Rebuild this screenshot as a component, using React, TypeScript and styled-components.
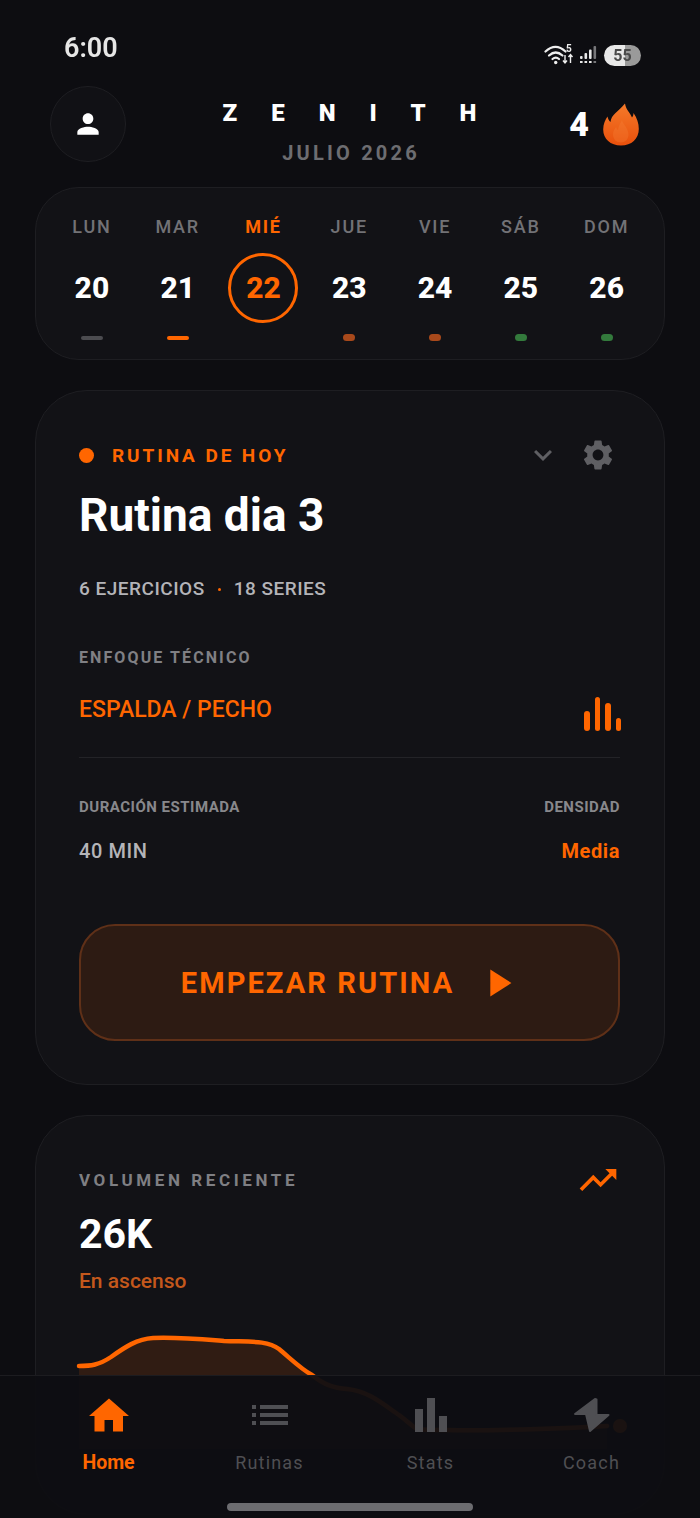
import * as React from 'react'
import styled, { createGlobalStyle } from 'styled-components'
import {
  MdPerson,
  MdSettings,
  MdKeyboardArrowDown,
  MdList,
  MdPlayArrow,
  MdTrendingUp,
} from 'react-icons/md'

const orange = '#ff6600'

const GlobalStyle = createGlobalStyle`
  html, body {
    margin: 0;
    padding: 0;
    background: #0d0d11;
  }
  * {
    box-sizing: border-box;
  }
`

const Page = styled.div`
  position: relative;
  width: 700px;
  height: 1518px;
  overflow: hidden;
  background: #0d0d11;
  color: #fff;
  font-family: Roboto, 'Noto Sans', sans-serif;
`

const StatusBar = styled.div`
  height: 86px;
  padding: 34px 59px 0 64px;
  display: flex;
  justify-content: space-between;
  align-items: flex-start;
  filter: blur(0.5px);
`

const Clock = styled.span`
  font-size: 27px;
  line-height: 29px;
  font-weight: 600;
  color: #e6e6e6;
`

const StatusIcons = styled.div`
  display: flex;
  align-items: center;
  gap: 5px;
  margin-top: 9px;
`

const Battery = styled.div`
  width: 37px;
  height: 21px;
  border-radius: 11px;
  background: linear-gradient(90deg, #e8e8e8 0 58%, #9a9a9a 58% 100%);
  color: #4a4a4a;
  font-size: 16px;
  font-weight: 700;
  line-height: 21px;
  text-align: center;
`

const Header = styled.header`
  height: 76px;
  margin: 0 61px 25px 50px;
  display: grid;
  grid-template-columns: 76px 1fr 71px;
  grid-template-rows: 76px;
  align-items: center;
`

const Avatar = styled.div`
  width: 76px;
  height: 76px;
  border-radius: 50%;
  border: 1px solid #1e1e22;
  background: #111115;
  display: flex;
  align-items: center;
  justify-content: center;
  color: #fff;
  font-size: 32px;
`

const Brand = styled.div`
  align-self: start;
  display: flex;
  flex-direction: column;
  align-items: center;
  margin-left: 5px;
  padding-top: 13px;
`

const Logo = styled.div`
  font-size: 24px;
  line-height: 28px;
  font-weight: 900;
  letter-spacing: 34px;
  margin-right: -34px;
`

const Month = styled.div`
  margin-top: 14px;
  font-size: 20px;
  line-height: 24px;
  font-weight: 700;
  letter-spacing: 3.2px;
  margin-right: -3px;
  color: #6d6d71;
`

const Streak = styled.div`
  display: flex;
  align-items: center;
  justify-content: flex-end;
  gap: 14px;
`

const StreakCount = styled.span`
  font-size: 34px;
  line-height: 40px;
  font-weight: 900;
`

const Week = styled.section`
  height: 173px;
  margin: 0 35px 30px;
  padding: 27px 12px 0 13px;
  border-radius: 44px;
  border: 1px solid #1e1e22;
  background: #121216;
  display: grid;
  grid-template-columns: repeat(7, 85.8px);
`

const Day = styled.div`
  display: flex;
  flex-direction: column;
  align-items: center;
`

const DayName = styled.span<{ $active?: boolean }>`
  font-size: 18px;
  line-height: 24px;
  font-weight: ${(p) => (p.$active ? 700 : 500)};
  letter-spacing: 1.8px;
  color: ${(p) => (p.$active ? orange : '#727276')};
`

const DayNumber = styled.span<{ $active?: boolean }>`
  width: 70px;
  height: 70px;
  margin-top: 14px;
  padding-bottom: 2px;
  border-radius: 50%;
  border: 3px solid ${(p) => (p.$active ? orange : 'transparent')};
  display: flex;
  align-items: center;
  justify-content: center;
  font-size: 30px;
  font-weight: 800;
  color: ${(p) => (p.$active ? orange : '#fff')};
`

const DayMark = styled.span<{ $color?: string; $wide?: boolean }>`
  width: ${(p) => (p.$wide ? 22 : 12)}px;
  height: ${(p) => (p.$wide ? 4 : 7)}px;
  margin-top: ${(p) => (p.$wide ? 13 : 11)}px;
  border-radius: 4px;
  background: ${(p) => p.$color ?? 'transparent'};
`

const Card = styled.section`
  margin: 0 35px 30px;
  padding: 0 44px 0 43px;
  border-radius: 52px;
  border: 1px solid #1e1e22;
  background: #121216;
`

const RoutineCard = styled(Card)`
  height: 695px;
  padding-top: 46px;
`

const RoutineTop = styled.div`
  height: 36px;
  display: flex;
  align-items: center;
`

const Dot = styled.span`
  width: 15px;
  height: 15px;
  border-radius: 50%;
  background: ${orange};
  margin-right: 18px;
`

const Eyebrow = styled.span`
  flex: 1;
  font-size: 19px;
  font-weight: 700;
  letter-spacing: 2.9px;
  color: ${orange};
`

const RoutineActions = styled.div`
  display: flex;
  align-items: center;
  gap: 19px;
  margin-right: 4px;
  color: #5f5f63;
`

const RoutineTitle = styled.h1`
  margin: 15px 0 0;
  font-size: 46px;
  line-height: 54px;
  font-weight: 700;
  color: #fff;
`

const Counts = styled.div`
  margin-top: 35px;
  display: flex;
  align-items: center;
  gap: 13px;
  font-size: 19px;
  line-height: 24px;
  font-weight: 500;
  letter-spacing: 0.5px;
  color: #b4b4b8;
`

const CountDot = styled.span`
  width: 3px;
  height: 3px;
  border-radius: 50%;
  background: ${orange};
`

const SectionLabel = styled.div`
  margin-top: 47px;
  font-size: 16px;
  line-height: 20px;
  font-weight: 700;
  letter-spacing: 2.1px;
  color: #808084;
`

const Focus = styled.div`
  height: 61px;
  margin-top: 29px;
  border-bottom: 1px solid #232327;
  display: flex;
  justify-content: space-between;
  align-items: flex-start;
`

const FocusName = styled.span`
  font-size: 23px;
  line-height: 26px;
  font-weight: 500;
  color: ${orange};
`

const Bars = styled.div`
  height: 35px;
  margin: -1px -1px 0 0;
  display: flex;
  align-items: flex-end;
  gap: 5px;
`

const Bar = styled.span<{ $h: number }>`
  width: 5.5px;
  height: ${(p) => p.$h}px;
  border-radius: 3px;
  background: ${orange};
`

const Facts = styled.div`
  margin-top: 40px;
  display: flex;
  justify-content: space-between;
`

const Fact = styled.div<{ $right?: boolean }>`
  display: flex;
  flex-direction: column;
  align-items: ${(p) => (p.$right ? 'flex-end' : 'flex-start')};
  gap: 23px;
`

const FactLabel = styled.span`
  font-size: 15px;
  line-height: 18px;
  font-weight: 700;
  letter-spacing: 0.5px;
  color: #88888c;
`

const FactValue = styled.span<{ $accent?: boolean }>`
  font-size: 20px;
  line-height: 24px;
  font-weight: ${(p) => (p.$accent ? 700 : 500)};
  letter-spacing: 0.6px;
  color: ${(p) => (p.$accent ? orange : '#b4b4b8')};
`

const StartButton = styled.button`
  width: 541px;
  height: 117px;
  margin-top: 61px;
  padding: 0 0 0 3px;
  border-radius: 36px;
  border: 2px solid #5f3018;
  background: #2d1b13;
  color: ${orange};
  font-family: inherit;
  font-size: 29px;
  font-weight: 700;
  letter-spacing: 2.1px;
  display: flex;
  align-items: center;
  justify-content: center;
  gap: 21px;
`

const VolumeCard = styled(Card)`
  height: 400px;
  padding-top: 48px;
`

const VolumeTop = styled.div`
  display: flex;
  justify-content: space-between;
  align-items: center;
  height: 32px;
  color: ${orange};
`

const VolumeLabel = styled.span`
  font-size: 17px;
  font-weight: 700;
  letter-spacing: 3.6px;
  color: #7f7f83;
`

const VolumeValue = styled.div`
  margin-top: 14px;
  font-size: 41px;
  line-height: 48px;
  font-weight: 700;
`

const VolumeTrend = styled.div`
  margin-top: 11px;
  font-size: 21px;
  line-height: 24px;
  font-weight: 500;
  color: #c4581c;
`

const Chart = styled.svg`
  display: block;
  margin-top: 36px;
  overflow: visible;
`

const BottomNav = styled.nav`
  position: absolute;
  left: 0;
  right: 0;
  bottom: 0;
  height: 143px;
  padding: 0 28px;
  border-top: 1px solid #1c1c20;
  background: rgba(14, 14, 18, 0.95);
  display: grid;
  grid-template-columns: repeat(4, 161px);
`

const NavItem = styled.div<{ $active?: boolean }>`
  display: flex;
  flex-direction: column;
  align-items: center;
  color: ${(p) => (p.$active ? orange : '#4f4f53')};
`

const NavIcon = styled.div`
  height: 44px;
  margin-top: 17px;
  display: flex;
  align-items: center;
  justify-content: center;
`

const NavLabel = styled.span<{ $active?: boolean }>`
  margin-top: 15px;
  font-size: ${(p) => (p.$active ? 19.5 : 18)}px;
  line-height: 22px;
  font-weight: ${(p) => (p.$active ? 700 : 400)};
  letter-spacing: ${(p) => (p.$active ? 0 : 1.2)}px;
`

const HomeIndicator = styled.div`
  position: absolute;
  left: 227px;
  bottom: 7px;
  width: 246px;
  height: 8px;
  border-radius: 4px;
  background: #6c6c70;
`

const WifiIcon = () => (
  <svg width="30" height="24" viewBox="0 0 30 24" fill="none">
    <path d="M1.5 8.5C8 2.5 15 2.5 21.5 8.5" stroke="#eee" strokeWidth="2.2" strokeLinecap="round" />
    <path d="M5 12.5C9.5 8.5 14 8.5 18.5 12.5" stroke="#eee" strokeWidth="2.2" strokeLinecap="round" />
    <path d="M8.5 16C10.5 14.3 13 14.3 15 16" stroke="#eee" strokeWidth="2.2" strokeLinecap="round" />
    <circle cx="11.7" cy="19.5" r="1.7" fill="#eee" />
    <text x="22" y="8.5" fontSize="10" fontWeight="700" fill="#eee" fontFamily="Roboto">5</text>
    <path d="M21 12v7.5M19 17.5l2 2.5 2-2.5" stroke="#eee" strokeWidth="1.4" />
    <path d="M26.5 20v-8M24.5 14l2-2.5 2 2.5" stroke="#eee" strokeWidth="1.4" />
  </svg>
)

const SignalIcon = () => (
  <svg width="20" height="22" viewBox="0 0 20 22" fill="#e8e8e8">
    <rect x="1" y="12" width="2.6" height="3" rx="1" />
    <rect x="1" y="17" width="2.6" height="2" />
    <rect x="5.5" y="9" width="2.6" height="6" rx="1" />
    <rect x="5.5" y="17" width="2.6" height="2" />
    <rect x="10" y="5.5" width="2.6" height="9.5" rx="1" />
    <rect x="10" y="17" width="2.6" height="2" />
    <rect x="14.5" y="2" width="2.6" height="13" rx="1" fill="#77777a" />
    <rect x="14.5" y="17" width="2.6" height="2" fill="#77777a" />
  </svg>
)

const FlameIcon = () => (
  <svg width="36" height="43" viewBox="0 0 36 43">
    <defs>
      <linearGradient id="flame" x1="0" y1="0" x2="0" y2="1">
        <stop offset="0" stopColor="#f47a2a" />
        <stop offset="1" stopColor="#e9500c" />
      </linearGradient>
    </defs>
    <path
      d="M22 0.5C23 7 27 9.5 29 14.5C30 13.5 30.5 11.5 30.5 10C34 14.5 35.8 20.5 35.8 26C35.8 36 28.5 42.5 18 42.5C7.5 42.5 0.2 36 0.2 26.5C0.2 21 2.5 16.5 4.5 13.5C5 16 6 18 7.5 19C8 11.5 15.5 8.5 22 0.5Z"
      fill="url(#flame)"
    />
    <path
      d="M19 17C20 21.5 25.5 25 25.5 31.5C25.5 36.5 22 39.5 18 39.5C13.5 39.5 10 36.5 10 31.5C10 28 11.8 25.5 13.2 24C13.6 25.5 14 26.5 15 27C15.2 23 17.5 20.5 19 17Z"
      fill="#f5833c"
      opacity="0.3"
    />
  </svg>
)

const HomeNavIcon = () => (
  <svg width="40" height="34" viewBox="0 0 40 34" fill="currentColor">
    <path d="M20 0.5L40 18H34V33.5H24V22H15.5V33.5H5.5V18H0Z" />
  </svg>
)

const BarsNavIcon = () => (
  <svg width="32" height="34" viewBox="0 0 32 34" fill="currentColor">
    <rect x="0" y="11" width="8" height="23" />
    <rect x="12" y="0" width="8" height="34" />
    <rect x="24" y="18" width="8" height="16" />
  </svg>
)

const BoltIcon = () => (
  <svg width="38" height="36" viewBox="0 0 38 36" fill="currentColor" stroke="currentColor" strokeWidth="2" strokeLinejoin="round">
    <path d="M22 2L2 17H13L17 34L35.5 18H23.5V2.5Z" />
  </svg>
)

const days = [
  { name: 'LUN', num: 20, mark: '#4c4c50', wide: true },
  { name: 'MAR', num: 21, mark: orange, wide: true },
  { name: 'MIÉ', num: 22, active: true },
  { name: 'JUE', num: 23, mark: '#a8491b' },
  { name: 'VIE', num: 24, mark: '#a8491b' },
  { name: 'SÁB', num: 25, mark: '#337a3c' },
  { name: 'DOM', num: 26, mark: '#337a3c' },
]

const curve =
  'M0 37C12 37 20 36 32 28C46 18 58 10 74 9C98 8 120 10 145 12C170 13 188 11 200 20C212 30 222 40 233 46C245 56 255 59 268 60C290 62 305 76 320 86C328 92 332 96 338 100C345 101 352 101 367 101C400 102 430 101 460 100C490 99 510 98 528 97'

const areaCurve = `${curve}L528 120L0 120Z`

const App = () => (
  <Page>
    <GlobalStyle />
    <StatusBar>
      <Clock>6:00</Clock>
      <StatusIcons>
        <WifiIcon />
        <SignalIcon />
        <Battery>55</Battery>
      </StatusIcons>
    </StatusBar>

    <Header>
      <Avatar>
        <MdPerson />
      </Avatar>
      <Brand>
        <Logo>ZENITH</Logo>
        <Month>JULIO 2026</Month>
      </Brand>
      <Streak>
        <StreakCount>4</StreakCount>
        <FlameIcon />
      </Streak>
    </Header>

    <Week>
      {days.map((d) => (
        <Day key={d.name}>
          <DayName $active={d.active}>{d.name}</DayName>
          <DayNumber $active={d.active}>{d.num}</DayNumber>
          <DayMark $color={d.mark} $wide={d.wide} />
        </Day>
      ))}
    </Week>

    <RoutineCard>
      <RoutineTop>
        <Dot />
        <Eyebrow>RUTINA DE HOY</Eyebrow>
        <RoutineActions>
          <MdKeyboardArrowDown size={36} />
          <MdSettings size={36} />
        </RoutineActions>
      </RoutineTop>
      <RoutineTitle>Rutina dia 3</RoutineTitle>
      <Counts>
        <span>6 EJERCICIOS</span>
        <CountDot />
        <span>18 SERIES</span>
      </Counts>
      <SectionLabel>ENFOQUE TÉCNICO</SectionLabel>
      <Focus>
        <FocusName>ESPALDA / PECHO</FocusName>
        <Bars>
          <Bar $h={20} />
          <Bar $h={34} />
          <Bar $h={28} />
          <Bar $h={13} />
        </Bars>
      </Focus>
      <Facts>
        <Fact>
          <FactLabel>DURACIÓN ESTIMADA</FactLabel>
          <FactValue>40 MIN</FactValue>
        </Fact>
        <Fact $right>
          <FactLabel>DENSIDAD</FactLabel>
          <FactValue $accent>Media</FactValue>
        </Fact>
      </Facts>
      <StartButton>
        EMPEZAR RUTINA
        <MdPlayArrow size={46} />
      </StartButton>
    </RoutineCard>

    <VolumeCard>
      <VolumeTop>
        <VolumeLabel>VOLUMEN RECIENTE</VolumeLabel>
        <MdTrendingUp size={44} />
      </VolumeTop>
      <VolumeValue>26K</VolumeValue>
      <VolumeTrend>En ascenso</VolumeTrend>
      <Chart width="542" height="120" viewBox="0 0 542 120">
        <path d={areaCurve} fill="#ff6600" opacity="0.13" />
        <path d={curve} fill="none" stroke="#ff6600" strokeWidth="4.5" strokeLinecap="round" />
        <circle cx="541" cy="97" r="7" fill="#ff6600" />
      </Chart>
    </VolumeCard>

    <BottomNav>
      <NavItem $active>
        <NavIcon>
          <HomeNavIcon />
        </NavIcon>
        <NavLabel $active>Home</NavLabel>
      </NavItem>
      <NavItem>
        <NavIcon>
          <MdList size={48} />
        </NavIcon>
        <NavLabel>Rutinas</NavLabel>
      </NavItem>
      <NavItem>
        <NavIcon>
          <BarsNavIcon />
        </NavIcon>
        <NavLabel>Stats</NavLabel>
      </NavItem>
      <NavItem>
        <NavIcon>
          <BoltIcon />
        </NavIcon>
        <NavLabel>Coach</NavLabel>
      </NavItem>
    </BottomNav>
    <HomeIndicator />
  </Page>
)

export default App
